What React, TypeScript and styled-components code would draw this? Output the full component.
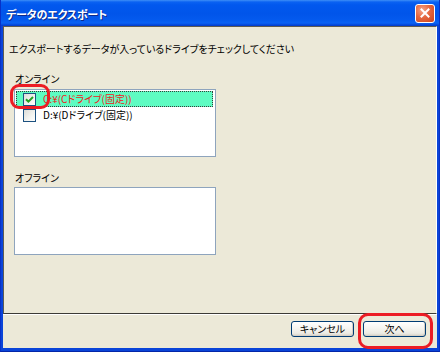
import React from "react";
import styled, { createGlobalStyle } from "styled-components";

const Global = createGlobalStyle`
  html, body { margin: 0; padding: 0; background: #ffffff; }
  body {
    font-family: "Noto Sans CJK JP", "Noto Sans", sans-serif;
    font-feature-settings: "palt" 1;
  }
  #root { width: 440px; height: 352px; }
`;

const Window = styled.div`
  position: relative;
  width: 440px;
  height: 352px;
  box-sizing: border-box;
  display: flex;
  flex-direction: column;
  background: #0a44d8;
  border-left: 1px solid #0831c8;
  border-right: 1px solid #0831c8;
  border-bottom: 1px solid #0426a8;
  overflow: hidden;
`;

const TitleBar = styled.div`
  height: 26px;
  flex: none;
  display: flex;
  align-items: center;
  justify-content: space-between;
  padding: 0 4px 0 5px;
  background: linear-gradient(
    to bottom,
    #3d8ff7 0px,
    #0a62f2 2px,
    #0158ee 5px,
    #0155ea 14px,
    #045aee 20px,
    #0a62f4 23px,
    #0447d8 25px,
    #0439c8 26px
  );
`;

const Title = styled.span`
  color: #ffffff;
  font-size: 11px;
  font-weight: 700;
  letter-spacing: -0.2px;
  text-shadow: 1px 1px 0 #0c2a8a;
  line-height: 16px;
  padding-top: 1px;
`;

const CloseButton = styled.div`
  width: 20px;
  height: 19px;
  box-sizing: border-box;
  border: 1px solid #ffffff;
  border-radius: 3px;
  background: radial-gradient(circle at 35% 30%, #f3a58a 0%, #e5673f 45%, #cc431c 100%);
  display: flex;
  align-items: center;
  justify-content: center;
`;

const Body = styled.div`
  flex: 1;
  margin: 0 2px 3px 2px;
  background: #ece9d8;
  display: flex;
  flex-direction: column;
`;

const Panel = styled.div`
  height: 288px;
  flex: none;
  box-sizing: border-box;
  border-top: 1px solid #5e5c52;
  border-left: 1px solid #5e5c52;
  border-right: 1px solid #ffffff;
  border-bottom: 1px solid #3c3b36;
  box-shadow: 0 1px 0 #ffffff;
  display: flex;
  flex-direction: column;
  padding: 14px 0 0 5px;
`;

const Text = styled.div<{ $mt?: number; $ml?: number }>`
  font-size: 10px;
  line-height: 16px;
  color: #000000;
  margin-top: ${(p) => p.$mt ?? 0}px;
  margin-left: ${(p) => p.$ml ?? 0}px;
  white-space: nowrap;
`;

const ListBox = styled.div<{ $mt: number }>`
  width: 202px;
  height: 68px;
  box-sizing: border-box;
  margin-top: ${(p) => p.$mt}px;
  margin-left: 5px;
  background: #ffffff;
  border: 1px solid #8ea4bd;
  padding: 1px 2px 1px 1px;
  display: flex;
  flex-direction: column;
`;

const Row = styled.div<{ $selected?: boolean }>`
  height: 16px;
  box-sizing: border-box;
  display: flex;
  align-items: center;
  gap: 7px;
  padding-left: 6px;
  background: ${(p) => (p.$selected ? "#5efcc2" : "transparent")};
  border: 1px dotted ${(p) => (p.$selected ? "#3a3a3a" : "transparent")};
`;

const RowLabel = styled.span<{ $red?: boolean }>`
  font-size: 10px;
  line-height: 14px;
  color: ${(p) => (p.$red ? "#f01818" : "#000000")};
  white-space: nowrap;
`;

const Box = styled.span`
  width: 13px;
  height: 13px;
  flex: none;
  box-sizing: border-box;
  border: 1px solid #1c5180;
  background: linear-gradient(135deg, #dcdcd7 0%, #f4f4f0 60%, #ffffff 100%);
  display: flex;
  align-items: center;
  justify-content: center;
`;

const Footer = styled.div`
  flex: 1;
  display: flex;
  justify-content: flex-end;
  align-items: flex-start;
  gap: 9px;
  padding: 7px 11px 0 0;
`;

const Button = styled.div`
  width: 63px;
  height: 16px;
  box-sizing: border-box;
  border: 1px solid #003c74;
  border-radius: 3px;
  background: linear-gradient(to bottom, #ffffff 0%, #f7f6f2 40%, #ecebe4 80%, #d6d0c5 100%);
  box-shadow: inset -1px -1px 0 #d6d0c5;
  font-size: 10px;
  line-height: 14px;
  color: #000000;
  text-align: center;
`;

const Highlight = styled.div<{ $l: number; $t: number; $w: number; $h: number; $r: number }>`
  position: absolute;
  left: ${(p) => p.$l}px;
  top: ${(p) => p.$t}px;
  width: ${(p) => p.$w}px;
  height: ${(p) => p.$h}px;
  box-sizing: border-box;
  border: 3px solid #ec1c24;
  border-radius: ${(p) => p.$r}px;
  pointer-events: none;
`;

const Check = () => (
  <svg width="9" height="9" viewBox="0 0 9 9">
    <path d="M1 4.2 L3.4 6.6 L8 2" fill="none" stroke="#21a121" strokeWidth="2" />
  </svg>
);

const CloseX = () => (
  <svg width="10" height="10" viewBox="0 0 10 10">
    <path d="M1.5 1.5 L8.5 8.5 M8.5 1.5 L1.5 8.5" stroke="#ffffff" strokeWidth="2" strokeLinecap="square" />
  </svg>
);

export default function App() {
  return (
    <>
      <Global />
      <Window>
        <TitleBar>
          <Title>データのエクスポート</Title>
          <CloseButton>
            <CloseX />
          </CloseButton>
        </TitleBar>
        <Body>
          <Panel>
            <Text>エクスポートするデータが入っているドライブをチェックしてください</Text>
            <Text $mt={14} $ml={6}>
              オンライン
            </Text>
            <ListBox $mt={2}>
              <Row $selected>
                <Box>
                  <Check />
                </Box>
                <RowLabel $red>C:¥(Cドライブ(固定))</RowLabel>
              </Row>
              <Row>
                <Box />
                <RowLabel>D:¥(Dドライブ(固定))</RowLabel>
              </Row>
            </ListBox>
            <Text $mt={13} $ml={6}>
              オフライン
            </Text>
            <ListBox $mt={1} />
          </Panel>
          <Footer>
            <Button>キャンセル</Button>
            <Button>次へ</Button>
          </Footer>
        </Body>
        <Highlight $l={9} $t={84} $w={40} $h={25} $r={9} />
        <Highlight $l={357} $t={313} $w={75} $h={36} $r={10} />
      </Window>
    </>
  );
}
